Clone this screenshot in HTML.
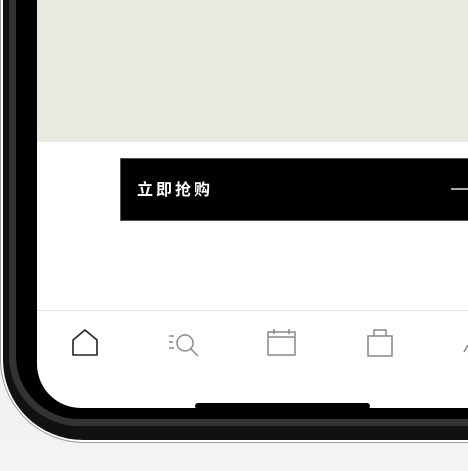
<!DOCTYPE html>
<html><head><meta charset="utf-8"><style>
*{margin:0;padding:0;box-sizing:border-box}
body{width:468px;height:471px;overflow:hidden;background:linear-gradient(#ededed,#f3f3f3);position:relative;font-family:"Liberation Sans","Noto Sans CJK SC",sans-serif}
.outer{position:absolute;left:0;top:-200px;width:700px;height:643px;border-radius:84px;background:#fff;border:1px solid #999}
.frame{position:absolute;left:3px;top:-200px;width:700px;height:640px;border-radius:80px;background:#111}
.band{position:absolute;left:9px;top:-200px;width:700px;height:626px;border-radius:70px;border:7px solid #333;background:#000}
.screen{position:absolute;left:37px;top:-200px;width:700px;height:608px;border-radius:44px;background:#fff;overflow:hidden}
.hero{position:absolute;left:0;top:0;width:100%;height:342px;background:#e9e9e2}
.btn{position:absolute;left:83px;top:358px;width:600px;height:63px;background:#000;border:1px solid #555}
.btn span{position:absolute;left:16px;top:17px;color:#fff;font-size:16px;font-weight:bold;letter-spacing:3px;font-family:"Noto Sans CJK SC",sans-serif}
.btn i{position:absolute;left:330px;top:29px;width:40px;height:1.5px;background:#aaa}
.div{position:absolute;left:0;top:510px;width:100%;height:1px;background:#e2e2e2}
.home{position:absolute;left:158px;top:603px;width:175px;height:6px;border-radius:3px;background:#000}
svg{position:absolute}
</style></head><body>
<div class="outer"></div>
<div class="frame"></div>
<div class="band"></div>
<div class="screen">
<div class="hero"></div>
<div class="btn"><span>立即抢购</span><i></i></div>
<div class="div"></div>
<div class="home"></div>
</div>
<svg width="468" height="471" style="left:0;top:0">
<path d="M73 355 V340 L85 330 L97 340 V355 Z" fill="none" stroke="#222" stroke-width="1.6" stroke-linejoin="round"/>
<g fill="none" stroke="#888" stroke-width="1.5">
<circle cx="185" cy="343" r="8"/>
<line x1="191" y1="349" x2="198" y2="356"/>
<line x1="169" y1="336" x2="174" y2="336"/><line x1="169" y1="342" x2="173" y2="342"/><line x1="169" y1="348" x2="174" y2="348"/>
<rect x="268" y="332" width="27" height="23"/>
<line x1="268" y1="337" x2="295" y2="337"/>
<line x1="274" y1="329" x2="274" y2="334"/><line x1="289" y1="329" x2="289" y2="334"/>
<rect x="368" y="336" width="24" height="20"/>
<path d="M374 336 V330 H386 V336"/>
<path d="M464 352 L468 345"/>
</g>
</svg>
</body></html>
